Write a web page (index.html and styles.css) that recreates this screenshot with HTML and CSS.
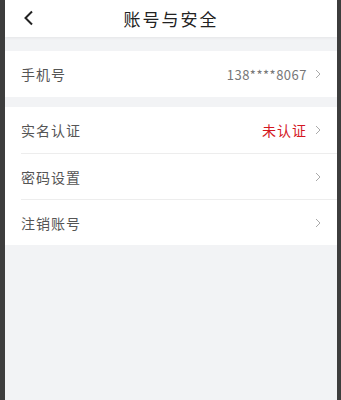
FILE: index.html
```html
<!DOCTYPE html>
<html lang="zh">
<head>
<meta charset="utf-8">
<link rel="stylesheet" href="styles.css">
</head>
<body>
<div class="frame">
  <div class="screen">
    <header class="nav">
      <span class="back"><svg width="12" height="16" viewBox="0 0 12 16"><path d="M9 1.5 L2.5 8 L9 14.5" fill="none" stroke="#222" stroke-width="2"/></svg></span>
      <h1 class="title">账号与安全</h1>
    </header>
    <section class="group g1">
      <div class="row">
        <span class="label">手机号</span>
        <span class="value">138****8067</span>
        <span class="chev"><svg width="6" height="10" viewBox="0 0 6 10"><path d="M1 1 L5 5 L1 9" fill="none" stroke="#aaa" stroke-width="1"/></svg></span>
      </div>
    </section>
    <section class="group g2">
      <div class="row">
        <span class="label">实名认证</span>
        <span class="value red">未认证</span>
        <span class="chev"><svg width="6" height="10" viewBox="0 0 6 10"><path d="M1 1 L5 5 L1 9" fill="none" stroke="#aaa" stroke-width="1"/></svg></span>
      </div>
      <div class="row">
        <span class="label">密码设置</span>
        <span class="value"></span>
        <span class="chev"><svg width="6" height="10" viewBox="0 0 6 10"><path d="M1 1 L5 5 L1 9" fill="none" stroke="#aaa" stroke-width="1"/></svg></span>
      </div>
      <div class="row">
        <span class="label">注销账号</span>
        <span class="value"></span>
        <span class="chev"><svg width="6" height="10" viewBox="0 0 6 10"><path d="M1 1 L5 5 L1 9" fill="none" stroke="#aaa" stroke-width="1"/></svg></span>
      </div>
    </section>
  </div>
</div>
</body>
</html>
```
FILE: styles.css
```css
html, body {
  margin: 0;
  padding: 0;
  height: 100%;
}
body {
  background: #3d3d3d;
  font-family: "Noto Sans CJK SC", "Noto Sans", sans-serif;
}
.frame {
  padding: 0 4px 0 5px;
  height: 100%;
  box-sizing: border-box;
}
.screen {
  background: #f2f3f5;
  height: 100%;
  display: flex;
  flex-direction: column;
}
.nav {
  height: 37px;
  background: #fff;
  display: flex;
  align-items: center;
  justify-content: center;
  position: relative;
  box-shadow: 0 1px 3px rgba(0,0,0,0.06);
}
.back {
  position: absolute;
  left: 18px;
  top: 10px;
  display: flex;
}
.title {
  margin: 0;
  font-size: 17px;
  font-weight: 400;
  color: #222;
  letter-spacing: 2px;
}
.group {
  background: #fff;
}
.g1 {
  margin-top: 14px;
}
.g2 {
  margin-top: 10px;
}
.row {
  height: 46px;
  display: flex;
  align-items: center;
  margin-left: 16px;
  padding-right: 16px;
  border-top: 1px solid #ededed;
  box-sizing: border-box;
}
.group .row:first-child {
  border-top: none;
}
.label {
  flex: 1;
  font-size: 14px;
  color: #555;
  letter-spacing: 1px;
}
.value {
  font-size: 13px;
  color: #777;
  letter-spacing: 0.5px;
}
.value.red {
  color: #d4181f;
  font-size: 14px;
  letter-spacing: 1px;
}
.chev {
  display: flex;
  margin-left: 8px;
}
```
